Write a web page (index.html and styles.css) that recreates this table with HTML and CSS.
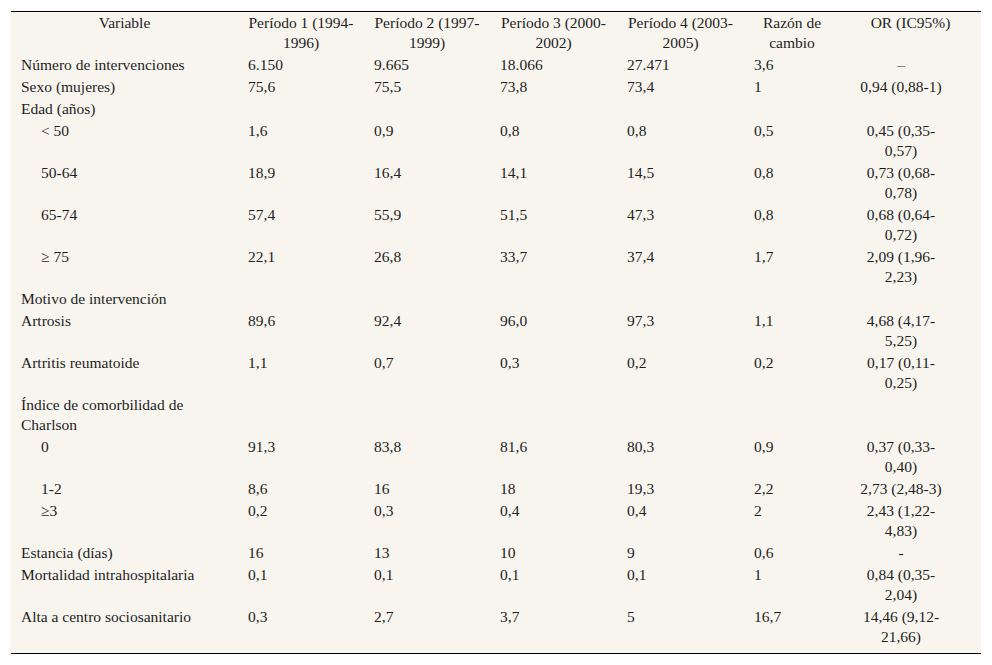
FILE: index.html
```html
<!DOCTYPE html>
<html lang="es">
<head>
<meta charset="utf-8">
<title>Tabla</title>
<link rel="stylesheet" href="styles.css">
</head>
<body>
<div class="panel">
  <div class="frame">
    <table class="data">
      <colgroup>
        <col class="c-var"><col class="c-per"><col class="c-per"><col class="c-per2"><col class="c-per2"><col class="c-raz"><col class="c-or">
      </colgroup>
      <thead>
        <tr>
          <th>Variable</th>
          <th>Período 1 (1994-1996)</th>
          <th>Período 2 (1997-1999)</th>
          <th>Período 3 (2000-2002)</th>
          <th>Período 4 (2003-2005)</th>
          <th>Razón de cambio</th>
          <th>OR (IC95%)</th>
        </tr>
      </thead>
      <tbody>
        <tr><td>Número de intervenciones</td><td>6.150</td><td>9.665</td><td>18.066</td><td>27.471</td><td>3,6</td><td class="or">–</td></tr>
        <tr><td>Sexo (mujeres)</td><td>75,6</td><td>75,5</td><td>73,8</td><td>73,4</td><td>1</td><td class="or">0,94 (0,88-1)</td></tr>
        <tr><td>Edad (años)</td><td></td><td></td><td></td><td></td><td></td><td class="or"></td></tr>
        <tr><td class="sub">&lt; 50</td><td>1,6</td><td>0,9</td><td>0,8</td><td>0,8</td><td>0,5</td><td class="or">0,45 (0,35-0,57)</td></tr>
        <tr><td class="sub">50-64</td><td>18,9</td><td>16,4</td><td>14,1</td><td>14,5</td><td>0,8</td><td class="or">0,73 (0,68-0,78)</td></tr>
        <tr><td class="sub">65-74</td><td>57,4</td><td>55,9</td><td>51,5</td><td>47,3</td><td>0,8</td><td class="or">0,68 (0,64-0,72)</td></tr>
        <tr><td class="sub">≥ 75</td><td>22,1</td><td>26,8</td><td>33,7</td><td>37,4</td><td>1,7</td><td class="or">2,09 (1,96-2,23)</td></tr>
        <tr><td>Motivo de intervención</td><td></td><td></td><td></td><td></td><td></td><td class="or"></td></tr>
        <tr><td>Artrosis</td><td>89,6</td><td>92,4</td><td>96,0</td><td>97,3</td><td>1,1</td><td class="or">4,68 (4,17-5,25)</td></tr>
        <tr><td>Artritis reumatoide</td><td>1,1</td><td>0,7</td><td>0,3</td><td>0,2</td><td>0,2</td><td class="or">0,17 (0,11-0,25)</td></tr>
        <tr><td>Índice de comorbilidad de Charlson</td><td></td><td></td><td></td><td></td><td></td><td class="or"></td></tr>
        <tr><td class="sub">0</td><td>91,3</td><td>83,8</td><td>81,6</td><td>80,3</td><td>0,9</td><td class="or">0,37 (0,33-0,40)</td></tr>
        <tr><td class="sub">1-2</td><td>8,6</td><td>16</td><td>18</td><td>19,3</td><td>2,2</td><td class="or">2,73 (2,48-3)</td></tr>
        <tr><td class="sub">≥3</td><td>0,2</td><td>0,3</td><td>0,4</td><td>0,4</td><td>2</td><td class="or">2,43 (1,22-4,83)</td></tr>
        <tr><td>Estancia (días)</td><td>16</td><td>13</td><td>10</td><td>9</td><td>0,6</td><td class="or">-</td></tr>
        <tr><td>Mortalidad intrahospitalaria</td><td>0,1</td><td>0,1</td><td>0,1</td><td>0,1</td><td>1</td><td class="or">0,84 (0,35-2,04)</td></tr>
        <tr><td>Alta a centro sociosanitario</td><td>0,3</td><td>2,7</td><td>3,7</td><td>5</td><td>16,7</td><td class="or">14,46 (9,12-21,66)</td></tr>
      </tbody>
    </table>
  </div>
</div>
</body>
</html>
```

FILE: styles.css
```css
html, body {
  margin: 0;
  padding: 0;
  background: #ffffff;
}

body {
  font-family: "Liberation Serif", "Times New Roman", serif;
  font-size: 15.5px;
  color: #1e1e1e;
}

.panel {
  margin: 10px 0 0 10px;
  width: 971px;
  padding: 1px 0 0 1px;
  box-sizing: border-box;
  background: #f8f5ef;
}

.frame {
  width: 970px;
  border-top: 1px solid #000;
  border-bottom: 1px solid #000;
  padding-bottom: 5px;
  box-sizing: content-box;
}

.data {
  width: 970px;
  table-layout: fixed;
  border-collapse: collapse;
  border-spacing: 0;
}

.c-var { width: 227px; }
.c-per { width: 126px; }
.c-per2 { width: 127px; }
.c-raz { width: 96px; }
.c-or { width: 141px; }

.data th,
.data td {
  padding: 1px 10px;
  line-height: 20px;
  vertical-align: top;
  text-align: left;
  font-weight: normal;
}

.data th {
  text-align: center;
}

.data td.sub {
  padding-left: 30px;
}

.data td.or {
  text-align: center;
  padding-left: 16px;
  padding-right: 35px;
}
```
